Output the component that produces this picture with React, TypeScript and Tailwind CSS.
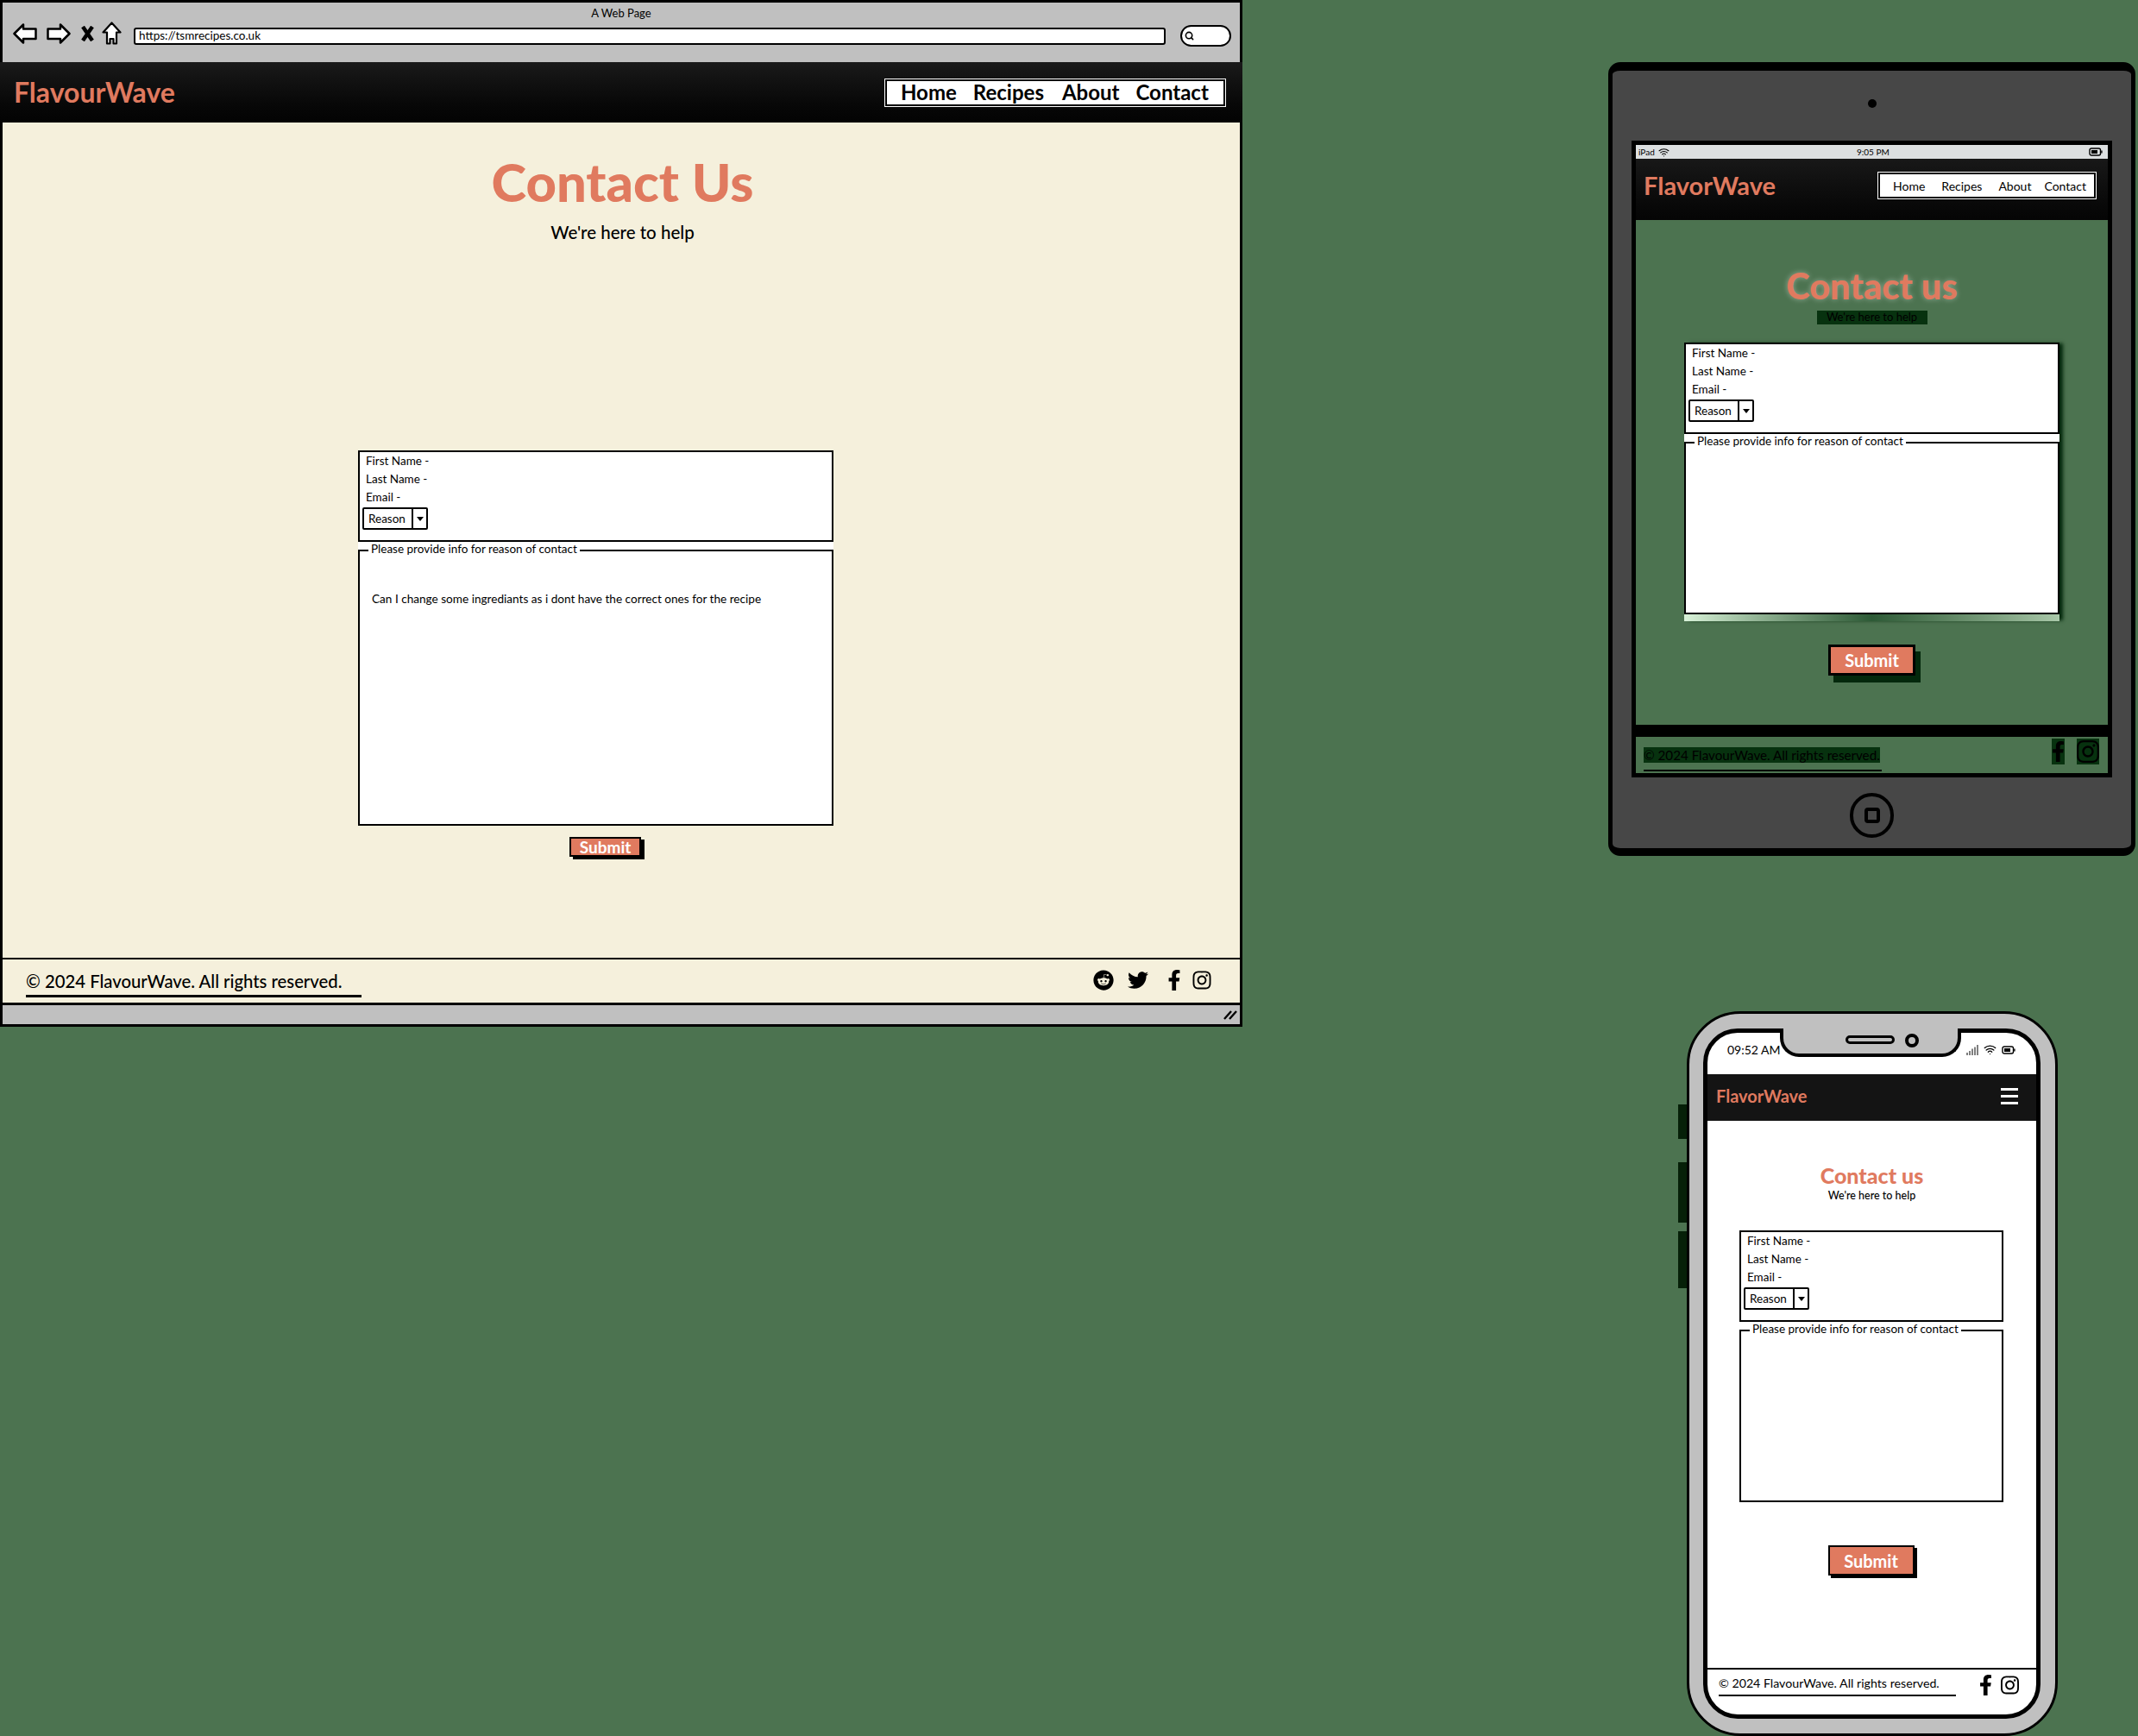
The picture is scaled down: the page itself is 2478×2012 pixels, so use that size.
import { Search, Wifi } from 'lucide-react'
import { FaFacebookF, FaInstagram, FaReddit, FaTwitter } from 'react-icons/fa'

const pageFont = { fontFamily: 'Lato, "Noto Sans", sans-serif' }

function Battery() {
	return (
		<svg viewBox="0 0 16 10" className="h-[10px] w-[16px]">
			<rect x="1" y="1" width="12.5" height="8" rx="2" fill="none" stroke="black" strokeWidth="1.4" />
			<rect x="3" y="3" width="7" height="4" fill="black" />
			<rect x="14.2" y="3.5" width="1.4" height="3" fill="black" />
		</svg>
	)
}

function SelectBox() {
	return (
		<div className="mt-[1px] -ml-[4px] flex h-[26px] w-[76px] rounded-[2px] border-2 border-black bg-white text-[13.5px]">
			<div className="flex flex-1 items-center pl-[5px]">Reason</div>
			<div className="flex w-[17px] items-center justify-center border-l-2 border-black">
				<div className="h-0 w-0 border-x-[4px] border-t-[5px] border-x-transparent border-t-black" />
			</div>
		</div>
	)
}

type FormProps = {
	boxHeight: string
	message?: string
}

// same form on all three devices, only the box height changes
function ContactForm({ boxHeight, message }: FormProps) {
	return (
		<div className="w-full bg-white text-[13.5px] leading-[21px] text-black">
			<div className="h-[106px] border-2 border-black pl-[7px]">
				<div>First Name -</div>
				<div>Last Name -</div>
				<div>Email -</div>
				<SelectBox />
			</div>
			<fieldset className={`${boxHeight} border-2 border-black`}>
				<legend className="ml-[10px] px-[3px] pb-[3px] text-[13.5px] leading-[16px]">Please provide info for reason of contact</legend>
				{message && <p className="pt-[38px] pl-[14px] text-[13.6px] leading-[18px]">{message}</p>}
			</fieldset>
		</div>
	)
}

function BrowserIcons() {
	return (
		<div className="flex items-center">
			<svg viewBox="0 0 28 24" className="h-[24px] w-[28px]">
				<polygon points="1.5,12 12,1.5 12,6.5 26.5,6.5 26.5,18 12,18 12,22.5" fill="white" stroke="black" strokeWidth="2.5" strokeLinejoin="round" />
			</svg>
			<svg viewBox="0 0 28 24" className="ml-[11px] h-[24px] w-[28px]">
				<polygon points="26.5,12 16,1.5 16,6.5 1.5,6.5 1.5,18 16,18 16,22.5" fill="white" stroke="black" strokeWidth="2.5" strokeLinejoin="round" />
			</svg>
			<svg viewBox="0 0 17 18" className="ml-[11px] h-[18px] w-[17px]">
				<path d="M3 1 L14 17 M14 1 L3 17" stroke="black" strokeWidth="4.5" />
			</svg>
			<svg viewBox="0 0 23 27" className="ml-[8px] h-[27px] w-[23px]">
				<polygon points="11.5,1.5 21.5,12.5 17,12.5 17,25.5 13.5,25.5 13.5,20 9.5,20 9.5,25.5 6,25.5 6,12.5 1.5,12.5" fill="white" stroke="black" strokeWidth="2.2" strokeLinejoin="round" />
			</svg>
		</div>
	)
}

function DesktopWindow() {
	return (
		<div className="absolute top-0 left-0 flex h-[1190px] w-[1440px] flex-col border-[3px] border-black bg-[#c0c0c0]">
			<div className="h-[69px] shrink-0">
				<div className="h-[21px] text-center text-[13px] leading-[24px]">A Web Page</div>
				<div className="flex h-[29px] items-center pl-[12px]">
					<BrowserIcons />
					<div className="mt-[6px] ml-[14px] flex h-[20px] w-[1196px] items-center rounded-[3px] border-2 border-black bg-white pl-[4px] text-[13.5px]">
						https://tsmrecipes.co.uk
					</div>
					<div className="mt-[5px] ml-[17px] flex h-[25px] w-[59px] items-center rounded-full border-2 border-black bg-white pl-[3px]">
						<Search size={11} strokeWidth={3.5} />
					</div>
				</div>
			</div>

			<header className="-mx-[3px] flex h-[70px] shrink-0 items-center justify-between bg-gradient-to-b from-[#1a1a1a] to-[#030303] pr-[20px] pl-[16px]">
				<div className="text-[32px] font-bold text-[#e07a5f]">FlavourWave</div>
				<nav className="flex h-[31px] w-[394px] items-center border-2 border-black bg-white pl-[16px] text-[24px] font-bold text-black outline outline-white">
					<span>Home</span>
					<span className="ml-[19px]">Recipes</span>
					<span className="ml-[21px]">About</span>
					<span className="ml-[19px]">Contact</span>
				</nav>
			</header>

			<main className="flex flex-1 flex-col bg-[#f5f0dc]">
				<h1 className="mt-[38px] pl-[3px] text-center text-[61.5px] leading-[60px] font-black text-[#e07a5f]">Contact Us</h1>
				<p className="mt-[15px] pl-[3px] text-center text-[20.5px] leading-[28px] font-medium text-black">We're here to help</p>
				<div className="mt-[239px] ml-[412px] w-[551px]">
					<ContactForm boxHeight="h-[329px]" message="Can I change some ingrediants as i dont have the correct ones for the recipe" />
				</div>
				<button className="mt-[13px] ml-[657px] h-[23px] w-[83px] self-start border-2 border-black bg-[#e07a5f] text-[19px] leading-[17px] font-bold text-white shadow-[4px_3px_0_#000]">
					Submit
				</button>
			</main>

			<footer className="flex h-[52px] shrink-0 items-start justify-between border-t-2 border-black bg-[#f5f0dc] pt-[12px] pr-[33px] pl-[27px]">
				<div className="w-[389px] border-b-[3px] border-black pb-[3px] text-[20.3px] leading-[26px] font-medium">© 2024 FlavourWave. All rights reserved.</div>
				<div className="flex items-center">
					<FaReddit className="h-[24px] w-[24px]" />
					<FaTwitter className="ml-[16px] h-[24px] w-[24px]" />
					<FaFacebookF className="ml-[22px] h-[24px] w-[16px]" />
					<FaInstagram className="ml-[13px] h-[24px] w-[22px]" />
				</div>
			</footer>

			<div className="flex h-[25px] shrink-0 items-center justify-end border-t-[3px] border-black pr-[3px]">
				<svg viewBox="0 0 16 12" className="h-[12px] w-[16px]">
					<path d="M1 11 L9 2 M7 11 L15 2" stroke="black" strokeWidth="2.4" />
				</svg>
			</div>
		</div>
	)
}

function TabletFrame() {
	return (
		<div className="absolute top-[72px] left-[1864px] flex h-[920px] w-[611px] flex-col items-center rounded-[14px] border-x-[5px] border-t-[10px] border-b-[9px] border-black bg-[#474747]">
			<div className="mt-[33px] h-[10px] w-[10px] rounded-full bg-black" />
			<div className="mt-[38px] flex h-[738px] w-[557px] flex-col border-[5px] border-black bg-[#4c7350]">
				<div className="flex h-[16px] shrink-0 items-center justify-between bg-[#dcdfe0] pr-[6px] pl-[3px] text-[10px]">
					<div className="flex items-center gap-[4px]">
						iPad <Wifi size={13} strokeWidth={2} />
					</div>
					<div className="pr-[14px]">9:05 PM</div>
					<Battery />
				</div>

				<header className="flex h-[71px] shrink-0 items-center justify-between bg-gradient-to-b from-[#181818] to-[#050505] pr-[14px] pb-[9px] pl-[9px]">
					<div className="text-[29px] leading-[34px] font-bold text-[#e07a5f]">FlavorWave</div>
					<nav className="flex h-[30px] w-[252px] items-center border-2 border-black bg-white pl-[15px] text-[14px] text-black outline outline-white">
						<span>Home</span>
						<span className="ml-[19px]">Recipes</span>
						<span className="ml-[19px]">About</span>
						<span className="ml-[15px]">Contact</span>
					</nav>
				</header>

				<main className="flex flex-1 flex-col items-center">
					<h1 className="mt-[54px] text-[41.5px] leading-[44px] font-black text-[#e07a5f] [text-shadow:0_0_6px_rgba(255,255,255,0.4)]">Contact us</h1>
					<p className="mt-[7px] flex h-[16px] w-[128px] items-center justify-center bg-[#07320f] text-[13px] text-black">We're here to help</p>
					<div className="mt-[21px] w-[435px] shadow-[5px_0_4px_-1px_#03280c]">
						<ContactForm boxHeight="h-[209px]" />
						<div className="h-[8px] bg-gradient-to-r from-[#d8f2d8] via-[#2d5a36] to-[#a9c8a9]" />
					</div>
					<button className="mt-[27px] h-[36px] w-[101px] border-[3px] border-black bg-[#e07a5f] text-[20px] leading-[28px] font-bold text-white shadow-[6px_8px_0_#03280c]">
						Submit
					</button>
				</main>

				<footer className="h-[56px] shrink-0 border-t-[14px] border-black">
					<div className="flex items-start justify-between pt-[2px] pr-[10px] pl-[9px]">
						<div className="mt-[7px] w-[276px] border-b-2 border-black pb-[5px]">
							<span className="bg-[#07320f] text-[15.2px] leading-[14px] text-black">© 2024 FlavourWave. All rights reserved.</span>
						</div>
						<div className="flex items-center text-black">
							<FaFacebookF className="h-[30px] w-[15px] bg-[#07320f]" />
							<FaInstagram className="ml-[14px] h-[30px] w-[26px] bg-[#07320f]" />
						</div>
					</div>
				</footer>
			</div>
			<div className="mt-[18px] flex h-[52px] w-[51px] items-center justify-center rounded-full border-[4px] border-black">
				<div className="h-[18px] w-[18px] rounded-[4px] border-[4px] border-black" />
			</div>
		</div>
	)
}

function PhoneFrame() {
	return (
		<div className="absolute top-[1172px] left-[1955px] h-[840px] w-[430px] rounded-[62px] border-[3px] border-black bg-[#c0c0c0] p-[17px] pl-[16px]">
			{/* side buttons */}
			<div className="absolute top-[105px] -left-[13px] h-[40px] w-[10px] bg-[#062008]" />
			<div className="absolute top-[172px] -left-[13px] h-[70px] w-[10px] bg-[#062008]" />
			<div className="absolute top-[252px] -left-[13px] h-[66px] w-[10px] bg-[#062008]" />

			<div className="flex h-full flex-col overflow-hidden rounded-[40px] border-[5px] border-black bg-white">
				<div className="flex h-[48px] shrink-0 items-start justify-between pt-[12px] pr-[24px] pl-[23px] text-[14px] leading-[16px]">
					<span>09:52 AM</span>
					<div className="flex items-center gap-[6px]">
						<svg viewBox="0 0 14 12" className="h-[12px] w-[14px]">
							<path d="M1 12V9M4 12V7M7 12V4.5M10 12V2.5M13 12V0" stroke="black" strokeWidth="1" />
						</svg>
						<Wifi size={15} strokeWidth={2} />
						<Battery />
					</div>
				</div>

				<header className="-mx-[5px] flex h-[54px] shrink-0 items-center justify-between bg-[#141414] pr-[26px] pb-[4px] pl-[15px]">
					<div className="text-[20px] font-bold text-[#e07a5f]">FlavorWave</div>
					<div className="flex h-[19px] w-[20px] flex-col justify-between">
						<div className="h-[3px] bg-white" />
						<div className="h-[3px] bg-white" />
						<div className="h-[3px] bg-white" />
					</div>
				</header>

				<main className="flex flex-1 flex-col items-center">
					<h1 className="mt-[48px] text-[25px] leading-[30px] font-black text-[#e07a5f]">Contact us</h1>
					<p className="mt-[1px] text-[12.5px] leading-[16px] font-medium">We're here to help</p>
					<div className="mt-[32px] mr-[1px] w-[306px]">
						<ContactForm boxHeight="h-[209px]" />
					</div>
					<button className="mt-[50px] mr-[2px] h-[35px] w-[100px] border-2 border-black bg-[#e07a5f] text-[20px] leading-[28px] font-bold text-white shadow-[3px_3px_0_#000]">
						Submit
					</button>
				</main>

				<footer className="flex h-[54px] shrink-0 items-start justify-between border-t-2 border-black pt-[6px] pr-[20px] pl-[13px]">
					<div className="w-[275px] border-b-2 border-black pb-[3px] text-[14.2px] leading-[20px]">© 2024 FlavourWave. All rights reserved.</div>
					<div className="flex items-center">
						<FaFacebookF className="h-[24px] w-[15px]" />
						<FaInstagram className="ml-[10px] h-[24px] w-[21px]" />
					</div>
				</footer>
			</div>

			{/* notch sits over the screen edge */}
			<div className="absolute top-[17px] left-[105px] flex h-[33px] w-[210px] items-start justify-center gap-[12px] rounded-b-[22px] border-x-[4px] border-b-[4px] border-black bg-[#c0c0c0] pt-[6px] pl-[26px]">
				<div className="mt-[2px] h-[10px] w-[57px] rounded-full border-[3px] border-black" />
				<div className="h-[16px] w-[16px] rounded-full border-[4px] border-black" />
			</div>
		</div>
	)
}

export default function App() {
	return (
		<div className="relative h-[2012px] w-[2478px] overflow-hidden bg-[#4c7350] text-black" style={pageFont}>
			<DesktopWindow />
			<TabletFrame />
			<PhoneFrame />
		</div>
	)
}
